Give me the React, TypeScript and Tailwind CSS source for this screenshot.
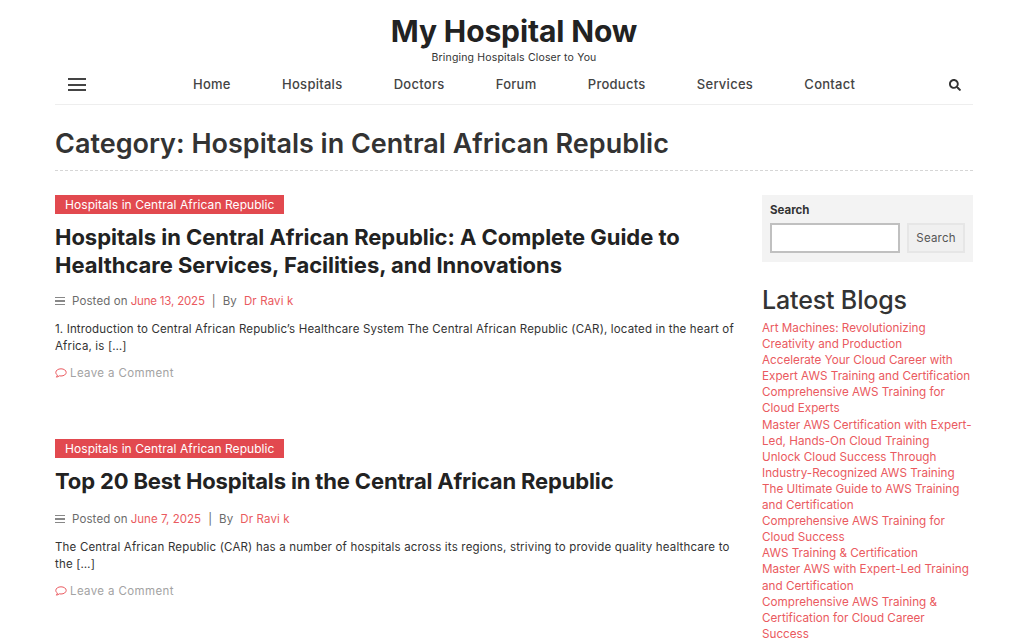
import type { ReactNode } from 'react';
import { FaSearch } from 'react-icons/fa';

const navItems = ['Home', 'Hospitals', 'Doctors', 'Forum', 'Products', 'Services', 'Contact'];

const blogs = [
  ['Art Machines: Revolutionizing', 'Creativity and Production'],
  ['Accelerate Your Cloud Career with', 'Expert AWS Training and Certification'],
  ['Comprehensive AWS Training for', 'Cloud Experts'],
  ['Master AWS Certification with Expert-', 'Led, Hands-On Cloud Training'],
  ['Unlock Cloud Success Through', 'Industry-Recognized AWS Training'],
  ['The Ultimate Guide to AWS Training', 'and Certification'],
  ['Comprehensive AWS Training for', 'Cloud Success'],
  ['AWS Training & Certification'],
  ['Master AWS with Expert-Led Training', 'and Certification'],
  ['Comprehensive AWS Training &', 'Certification for Cloud Career', 'Success'],
];

function CommentIcon() {
  return (
    <svg viewBox="0 0 12 10" className="h-[10px] w-[12px] shrink-0" fill="none" stroke="#ea5a60" strokeWidth="1">
      <path d="M6 .8c2.900 0 5.200 1.600 5.200 3.600S8.900 8 6 8c-.6 0-1.200-.1-1.700-.2C3.600 8.500 2.500 9.100 1.300 9.100c.6-.6 1-1.300 1.100-2C1.400 6.400.8 5.500.8 4.400.8 2.400 3.100.8 6 .8z" />
    </svg>
  );
}

type PostProps = {
  title: ReactNode;
  date: string;
  excerpt: ReactNode;
  className: string;
  metaGap: string;
  titleFit: string;
  dateFit: string;
  excerptFit: string;
};

function Post({ title, date, excerpt, className, metaGap, titleFit, dateFit, excerptFit }: PostProps) {
  return (
    <article className={className}>
      <div className="h-[19px] w-fit bg-[#e2494f] px-[10px] text-[12px] leading-[19px] tracking-[0.06px] text-white">
        Hospitals in Central African Republic
      </div>
      <h2 className={`mt-[9px] text-[22px] font-bold leading-[28px] text-[#222] ${titleFit}`}>{title}</h2>
      <div className={`${metaGap} flex items-center text-[11.5px] leading-[16px] tracking-[0.12px] text-[#6b6b6b]`}>
        <span className="mr-[7px] flex w-[10px] flex-col gap-[2px]">
          <i className="h-[1.5px] bg-[#888]" />
          <i className="h-[1.5px] bg-[#888]" />
          <i className="h-[1.5px] bg-[#888]" />
        </span>
        <span>Posted on</span>
        <span className={`ml-[3px] text-[#ea5a60] ${dateFit}`}>{date}</span>
        <span className="mx-[7px] text-[#666]">|</span>
        <span>By</span>
        <span className="ml-[7px] text-[#ea5a60]">Dr Ravi k</span>
      </div>
      <p className={`mt-[12px] text-[11.5px] leading-[16.5px] text-[#333] ${excerptFit}`}>{excerpt}</p>
      <div className="mt-[11px] flex items-center gap-[3px] text-[11.5px] leading-[16px] tracking-[0.38px] text-[#a3a3a3]">
        <CommentIcon />
        Leave a Comment
      </div>
    </article>
  );
}

export default function App() {
  return (
    <div className="h-screen overflow-hidden bg-white font-['Inter',sans-serif] text-[#222]">
      <div className="ml-[55px] w-[918px]">
        <header className="border-b border-[#eeeeee]">
          <div className="pt-[12px] text-center">
            <h1 className="text-[30px] font-bold leading-[38px] tracking-[-0.12px] text-[#222]">My Hospital Now</h1>
            <p className="mt-[1px] text-[10.5px] leading-[14px] tracking-[0.16px] text-[#333]">Bringing Hospitals Closer to You</p>
          </div>
          <nav className="flex h-[39px] items-center">
            <span className="ml-[13px] flex w-[18px] flex-col gap-[3.500px]">
              <i className="h-[2px] bg-[#444]" />
              <i className="h-[2px] bg-[#444]" />
              <i className="h-[2px] bg-[#444]" />
            </span>
            <ul className="ml-[107px] flex gap-[51.300px] text-[13px] font-medium tracking-[0.26px] text-[#444]">
              {navItems.map((item) => (
                <li key={item}>{item}</li>
              ))}
            </ul>
            <FaSearch className="ml-auto mr-[12px] h-[12px] w-[12px] text-[#333]" />
          </nav>
        </header>

        <h1 className="mt-[21px] border-b border-dashed border-[#d6d6d6] pb-[8px] text-[27px] font-semibold leading-[36px] text-[#333]">
          Category: Hospitals in Central African Republic
        </h1>

        <div className="mt-[24px] flex justify-between">
          <main className="w-[680px]">
            <Post
              className=""
              metaGap="mt-[14px]"
              titleFit="tracking-[-0.03px]"
              dateFit="tracking-[-0.18px]"
              excerptFit="tracking-[0.15px]"
              title={<>Hospitals in Central African Republic: A Complete Guide to<br />Healthcare Services, Facilities, and Innovations</>}
              date="June 13, 2025"
              excerpt={<>1. Introduction to Central African Republic’s Healthcare System The Central African Republic (CAR), located in the heart of<br />Africa, is […]</>}
            />
            <Post
              className="mt-[58px]"
              metaGap="mt-[16px]"
              titleFit="tracking-[-0.15px]"
              dateFit="tracking-[0.04px]"
              excerptFit="tracking-[0.18px]"
              title="Top 20 Best Hospitals in the Central African Republic"
              date="June 7, 2025"
              excerpt={<>The Central African Republic (CAR) has a number of hospitals across its regions, striving to provide quality healthcare to<br />the […]</>}
            />
          </main>

          <aside className="w-[211px]">
            <div className="h-[67px] bg-[#f3f3f3] px-[8px] pt-[7px]">
              <div className="text-[11.5px] font-bold leading-[16px] text-[#333]">Search</div>
              <div className="mt-[5px] flex justify-between">
                <div className="h-[30px] w-[130px] border-2 border-[#c0c0c0] bg-white" />
                <div className="flex h-[30px] w-[58px] items-center justify-center border-2 border-[#e6e6e6] bg-[#f0f0f0] pt-[1px] text-[11.5px] tracking-[0.2px] text-[#555]">
                  Search
                </div>
              </div>
            </div>
            <h2 className="mt-[20px] text-[25px] font-medium leading-[36px] tracking-[-0.15px] text-[#333]">Latest Blogs</h2>
            <ul className="mt-[2px] whitespace-nowrap text-[11.7px] leading-[16.100px] text-[#ea5a60]">
              {blogs.map((lines) => (
                <li key={lines[0] + lines.length + lines[lines.length - 1]}>
                  {lines.map((line) => (
                    <div key={line}>{line}</div>
                  ))}
                </li>
              ))}
            </ul>
          </aside>
        </div>
      </div>
    </div>
  );
}
